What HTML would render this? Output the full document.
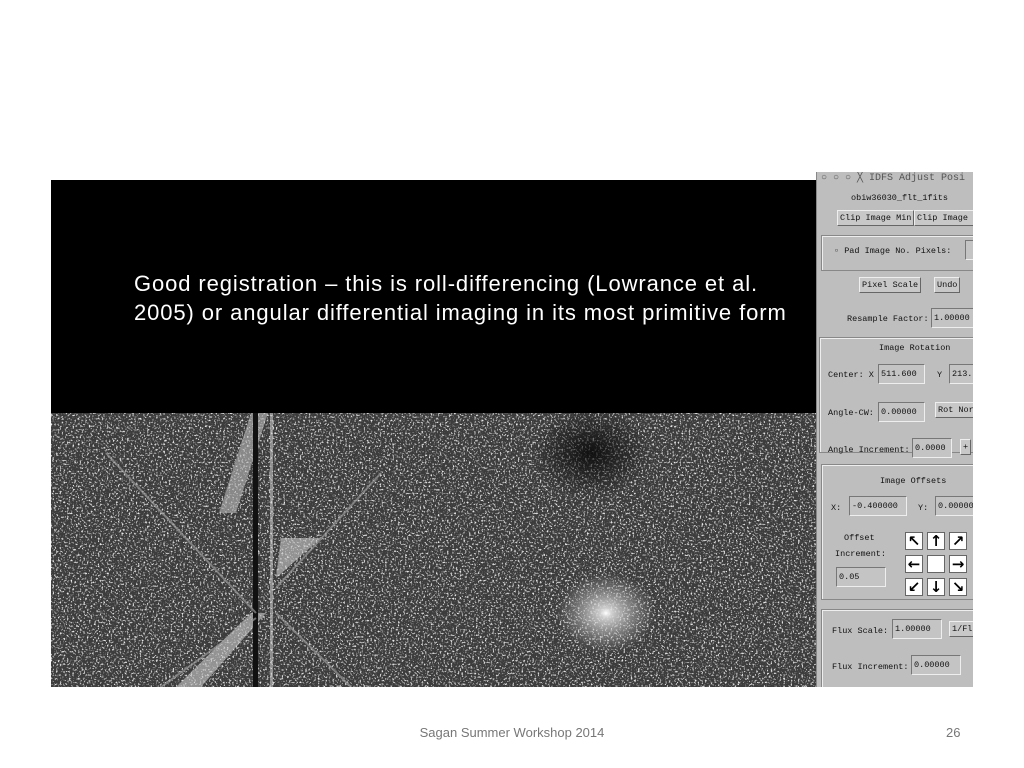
<!DOCTYPE html>
<html><head><meta charset="utf-8"><style>
*{margin:0;padding:0;box-sizing:border-box}
body{width:1024px;height:768px;background:#fff;position:relative;overflow:hidden;font-family:"Liberation Sans",sans-serif}
.a{position:absolute}
#blk{left:51px;top:180px;width:765px;height:233px;background:#000}
#img{left:51px;top:413px;width:765px;height:274px;background:#565656;overflow:hidden}
#txt{left:134px;top:269px;color:#fff;font-size:22px;letter-spacing:0.9px;line-height:29px;font-family:"Liberation Sans",sans-serif}
#panel{left:816px;top:172px;width:157px;height:515px;background:#bebebe;overflow:hidden;font-family:"Liberation Mono",monospace;font-size:8.5px;color:#111;border-left:1px solid #888}
.b{position:absolute;background:#c8c8c8;border:1px solid #eee;border-right-color:#666;border-bottom-color:#666;white-space:nowrap;padding:1px 2px;line-height:12px}
.f{position:absolute;background:#c4c4c4;border:1px solid #777;border-right-color:#eee;border-bottom-color:#eee;white-space:nowrap;padding:3px 2px;line-height:12px;height:20px}
.l{position:absolute;white-space:nowrap;line-height:12px}
.g{position:absolute;border:1px solid #888;border-right:none;box-shadow:inset 1px 1px 0 #eee}
.ar{position:absolute;width:18px;height:18px;background:#fff;border:1px solid #666;font:bold 15px/16px "DejaVu Sans",sans-serif;text-align:center;color:#000}
#foot{left:0;top:725px;width:1024px;text-align:center;font-size:13px;color:#777}
#num{left:946px;top:725px;font-size:13px;color:#777}
</style></head><body>
<div class="a" id="blk"></div>
<div class="a" id="img">
<svg width="765" height="274">
<defs>
<filter id="n" x="0" y="0" width="100%" height="100%">
<feTurbulence type="fractalNoise" baseFrequency="0.55" numOctaves="2" seed="3"/>
<feColorMatrix type="matrix" values="0 0 0 0 0.8  0 0 0 0 0.8  0 0 0 0 0.8  5 0 0 0 -2.7"/>
</filter>
<radialGradient id="s"><stop offset="0" stop-color="#fff"/><stop offset=".12" stop-color="#ddd" stop-opacity=".9"/><stop offset="1" stop-color="#aaa" stop-opacity="0"/></radialGradient>
<radialGradient id="d"><stop offset="0" stop-color="#000" stop-opacity=".75"/><stop offset="1" stop-color="#000" stop-opacity="0"/></radialGradient>
</defs>
<rect width="765" height="274" fill="#3c3c3c"/>
<rect width="765" height="274" filter="url(#n)"/>
<ellipse cx="540" cy="40" rx="60" ry="45" fill="url(#d)"/>
<ellipse cx="555" cy="200" rx="50" ry="40" fill="url(#s)"/>
<path d="M200 0 L217 0 L185 100 L168 100Z" fill="#bbb" opacity=".6"/>
<path d="M230 125 L270 125 L225 165Z" fill="#ccc" opacity=".6"/>
<path d="M200 200 L215 200 L150 274 L125 274Z" fill="#ccc" opacity=".6"/>
<rect x="202" y="0" width="5" height="274" fill="#111"/>
<rect x="219" y="0" width="3" height="274" fill="#ddd" opacity=".5"/>
<path d="M55 40 L205 200 M225 200 L300 274 M205 205 L110 274 M225 175 L330 60" stroke="#999" stroke-width="2" opacity=".7"/>
</svg>
</div>
<div class="a" id="txt">Good registration – this is roll-differencing (Lowrance et al.<br>2005) or angular differential imaging in its most primitive form</div>
<div class="a" id="panel">
<div class="l" style="left:4px;top:1px;color:#555;font-size:10px">○ ○ ○ ╳ IDFS Adjust Posi</div>
<div class="l" style="left:34px;top:20px">obiw36030_flt_1fits</div>
<div class="b" style="left:20px;top:38px">Clip Image Min</div>
<div class="b" style="left:97px;top:38px">Clip Image M</div>
<div class="g" style="left:4px;top:63px;width:160px;height:36px"></div>
<div class="l" style="left:17px;top:73px">▫ Pad Image  No. Pixels:</div>
<div class="f" style="left:148px;top:68px;width:20px"></div>
<div class="b" style="left:42px;top:105px">Pixel Scale</div>
<div class="b" style="left:117px;top:105px">Undo</div>
<div class="l" style="left:30px;top:141px">Resample Factor:</div>
<div class="f" style="left:114px;top:136px;width:50px">1.00000</div>
<div class="g" style="left:2px;top:165px;width:160px;height:116px"></div>
<div class="l" style="left:62px;top:170px">Image Rotation</div>
<div class="l" style="left:11px;top:197px">Center: X</div>
<div class="f" style="left:61px;top:192px;width:47px">511.600</div>
<div class="l" style="left:120px;top:197px">Y</div>
<div class="f" style="left:132px;top:192px;width:40px">213.</div>
<div class="l" style="left:11px;top:235px">Angle-CW:</div>
<div class="f" style="left:61px;top:230px;width:47px">0.00000</div>
<div class="b" style="left:118px;top:230px">Rot Nor</div>
<div class="l" style="left:11px;top:272px">Angle Increment:</div>
<div class="f" style="left:95px;top:266px;width:40px">0.0000</div>
<div class="b" style="left:143px;top:267px">+</div>
<div class="g" style="left:4px;top:292px;width:160px;height:136px"></div>
<div class="l" style="left:63px;top:303px">Image Offsets</div>
<div class="l" style="left:14px;top:330px">X:</div>
<div class="f" style="left:32px;top:324px;width:58px">-0.400000</div>
<div class="l" style="left:101px;top:330px">Y:</div>
<div class="f" style="left:118px;top:324px;width:50px">0.00000</div>
<div class="l" style="left:27px;top:360px">Offset</div>
<div class="l" style="left:18px;top:376px">Increment:</div>
<div class="f" style="left:19px;top:395px;width:50px">0.05</div>
<div class="ar" style="left:88px;top:360px">↖</div><div class="ar" style="left:110px;top:360px">↑</div><div class="ar" style="left:132px;top:360px">↗</div>
<div class="ar" style="left:88px;top:383px">←</div><div class="ar" style="left:110px;top:383px"></div><div class="ar" style="left:132px;top:383px">→</div>
<div class="ar" style="left:88px;top:406px">↙</div><div class="ar" style="left:110px;top:406px">↓</div><div class="ar" style="left:132px;top:406px">↘</div>
<div class="g" style="left:4px;top:437px;width:160px;height:90px"></div>
<div class="l" style="left:15px;top:453px">Flux Scale:</div>
<div class="f" style="left:75px;top:447px;width:50px">1.00000</div>
<div class="b" style="left:132px;top:449px">1/Fl</div>
<div class="l" style="left:15px;top:489px">Flux Increment:</div>
<div class="f" style="left:94px;top:483px;width:50px">0.00000</div>
</div>
<div class="a" id="foot">Sagan Summer Workshop 2014</div>
<div class="a" id="num">26</div>
</body></html>
